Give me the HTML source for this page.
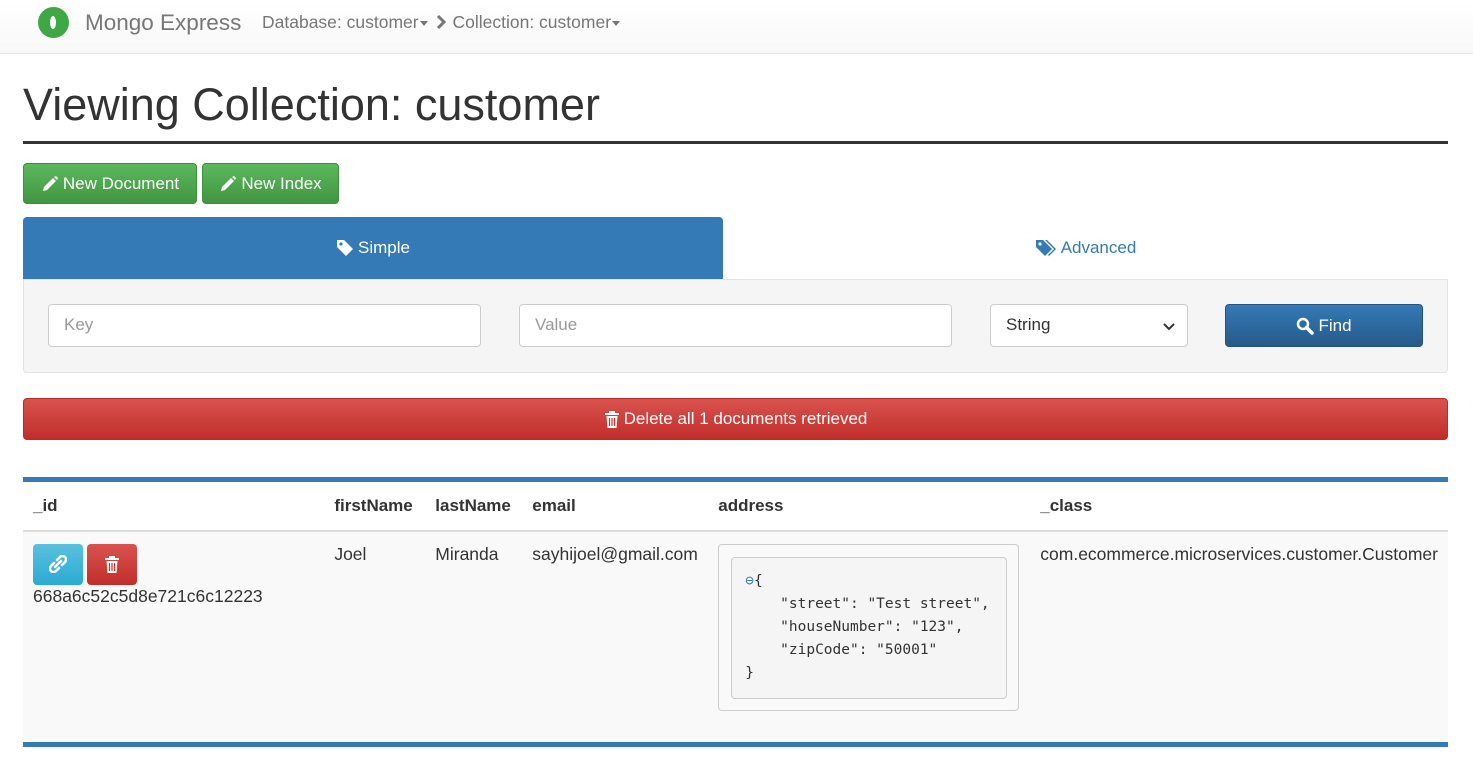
<!DOCTYPE html>
<html><head><meta charset="utf-8"><style>
*{box-sizing:border-box}
body{margin:0;width:1473px;height:765px;overflow:hidden;font-family:"Liberation Sans",sans-serif;font-size:16px;color:#333;background:#fff}
.nav{height:54px;background:linear-gradient(#fff,#f8f8f8);border-bottom:1px solid #e7e7e7;position:relative}
.nav .logo{position:absolute;left:38px;top:7px;width:31px;height:31px;border-radius:50%;background:#3fa845}
.nav .logo:after{content:"";position:absolute;left:12px;top:9px;width:6px;height:13px;border-radius:50%;background:#fff}
.nav .brand{position:absolute;left:85px;top:10px;font-size:22.5px;color:#777}
.nav .crumb{position:absolute;left:262px;top:12px;font-size:17.5px;color:#777}
.caret{display:inline-block;border-top:5px solid #777;border-left:4px solid transparent;border-right:4px solid transparent;vertical-align:middle;margin-left:1px}
h1{position:absolute;left:23px;top:79px;margin:0;font-weight:400;font-size:45px;color:#333}
.hr{position:absolute;left:23px;top:141px;width:1425px;height:3px;background:#333}
.btn{position:absolute;color:#fff;border-radius:4px;font-size:17px;display:flex;align-items:center;justify-content:center}
.btn svg,.tab svg{margin-right:4px}
.green{background:linear-gradient(#5cb85c,#419641);border:1px solid #3e8f3e}
.tab{position:absolute;top:217px;height:62px;display:flex;align-items:center;justify-content:center;font-size:17px}
.well{position:absolute;left:23px;top:279px;width:1425px;height:94px;background:#f5f5f5;border:1px solid #e3e3e3;border-radius:0 0 4px 4px}
.inp{position:absolute;top:304px;height:43px;background:#fff;border:1px solid #ccc;border-radius:4px;color:#999;font-size:17px;padding:10px 15px}
table{position:absolute;left:23px;top:477px;width:1425px;border-collapse:collapse;border-top:5px solid #337ab7;border-bottom:5px solid #337ab7}
th{text-align:left;font-size:17px;padding:0 10px;height:51px;border-bottom:2px solid #ddd}
td{vertical-align:top;font-size:17.5px;padding:12px 10px 0;background:#f9f9f9;height:214px}
pre{margin:0;font-family:"DejaVu Sans Mono",monospace;font-size:14.5px;line-height:23px;color:#333;background:#f5f5f5;border:1px solid #ccc;border-radius:4px;padding:12px 13px;width:276px;height:142px}
.box{border:1px solid #ccc;border-radius:4px;padding:12px;width:301px;height:167px;margin-top:0}
</style></head><body>
<div class="nav"><div class="logo"></div><div class="brand">Mongo Express</div>
<div class="crumb">Database: customer<span class="caret"></span> <svg width="10" height="14" viewBox="0 0 10 14" style="vertical-align:-1px;margin:0 6px 0 4px"><path d="M2 1l6 6-6 6" stroke="#777" stroke-width="3" fill="none"/></svg>Collection: customer<span class="caret"></span></div></div>
<h1>Viewing Collection: customer</h1>
<div class="hr"></div>
<div class="btn green" style="left:23px;top:163px;width:174px;height:41px"><svg width="18" height="18" viewBox="0 0 18 18"><path d="M2 16l1-4 9-9 3 3-9 9zM13 2l2-1 2 2-1 2z" fill="#fff"/></svg>New Document</div>
<div class="btn green" style="left:202px;top:163px;width:137px;height:41px"><svg width="18" height="18" viewBox="0 0 18 18"><path d="M2 16l1-4 9-9 3 3-9 9zM13 2l2-1 2 2-1 2z" fill="#fff"/></svg>New Index</div>
<div class="tab" style="left:23px;width:700px;background:#337ab7;color:#fff;border-radius:4px 4px 0 0"><svg width="18" height="18" viewBox="0 0 18 18"><path d="M1 1h7l9 9-7 7-9-9z" fill="#fff"/><circle cx="5" cy="5" r="1.6" fill="#337ab7"/></svg>Simple</div>
<div class="tab" style="left:723px;width:725px;color:#337ab7"><svg width="22" height="18" viewBox="0 0 22 18"><path d="M1 1h7l9 9-7 7-9-9z" fill="#337ab7"/><path d="M10 1h2l9 9-7 7-1-1 6-6z" fill="#337ab7"/><circle cx="5" cy="5" r="1.6" fill="#fff"/></svg>Advanced</div>
<div class="well"></div>
<div class="inp" style="left:48px;width:433px">Key</div>
<div class="inp" style="left:519px;width:433px">Value</div>
<div class="inp" style="left:990px;width:198px;color:#333">String<svg width="12" height="8" viewBox="0 0 12 8" style="position:absolute;right:12px;top:18px"><path d="M1 1l5 5 5-5" stroke="#333" stroke-width="2" fill="none"/></svg></div>
<div class="btn" style="left:1225px;top:304px;width:198px;height:43px;background:linear-gradient(#337ab7,#265a88);border:1px solid #245580"><svg width="18" height="18" viewBox="0 0 18 18"><circle cx="7" cy="7" r="5" stroke="#fff" stroke-width="2.5" fill="none"/><path d="M10.5 10.5l5.5 5.5" stroke="#fff" stroke-width="3.5" stroke-linecap="round"/></svg>Find</div>
<div class="btn" style="left:23px;top:398px;width:1425px;height:42px;background:linear-gradient(#d9534f,#c12e2a);border:1px solid #b92c28"><svg width="16" height="19" viewBox="0 0 16 19"><path d="M1 3h14v2H1zM5 1h6v2H5zM2.5 6h11l-1 12h-9z" fill="#fff"/><path d="M5.5 8v8M8 8v8M10.5 8v8" stroke="#c9302c" stroke-width="1.2"/></svg>Delete all 1 documents retrieved</div>
<table>
<tr><th style="width:302px">_id</th><th style="width:101px">firstName</th><th style="width:97px">lastName</th><th style="width:186px">email</th><th style="width:322px">address</th><th>_class</th></tr>
<tr><td><div style="display:flex;gap:4px;margin-top:0"><span style="width:50px;height:41px;border-radius:4px;background:linear-gradient(#5bc0de,#2aabd2);display:flex;align-items:center;justify-content:center"><svg width="18" height="18" viewBox="0 0 18 18"><path d="M8 5l3-3a3 3 0 0 1 5 5l-3 3M10 13l-3 3a3 3 0 0 1-5-5l3-3M6 12l6-6" stroke="#fff" stroke-width="2.5" fill="none" stroke-linecap="round"/></svg></span><span style="width:50px;height:41px;border-radius:4px;background:linear-gradient(#d9534f,#c12e2a);display:flex;align-items:center;justify-content:center"><svg width="16" height="19" viewBox="0 0 16 19"><path d="M1 3h14v2H1zM5 1h6v2H5zM2.5 6h11l-1 12h-9z" fill="#fff"/><path d="M5.5 8v8M8 8v8M10.5 8v8" stroke="#c9302c" stroke-width="1.2"/></svg></span></div><div style="margin-top:1px">668a6c52c5d8e721c6c12223</div></td>
<td>Joel</td><td>Miranda</td><td>sayhijoel@gmail.com</td>
<td><div class="box"><pre><span style="color:#337ab7">&#x2296;</span>{
    "street": "Test street",
    "houseNumber": "123",
    "zipCode": "50001"
}</pre></div></td>
<td>com.ecommerce.microservices.customer.Customer</td></tr>
</table>
</body></html>
